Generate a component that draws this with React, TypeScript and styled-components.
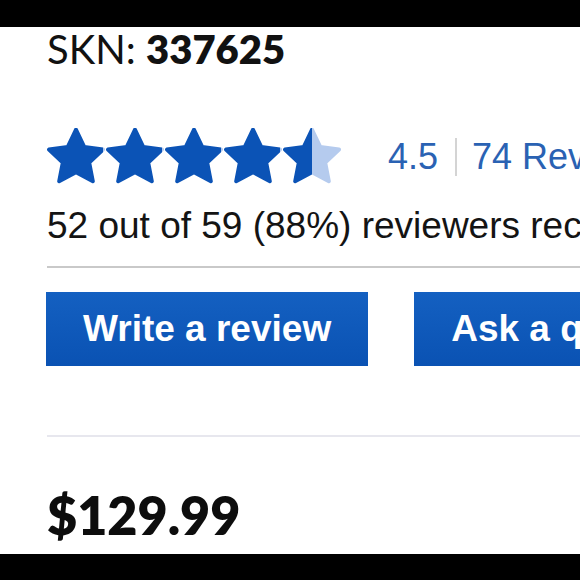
import React from 'react';
import styled, { createGlobalStyle } from 'styled-components';

const GlobalStyle = createGlobalStyle`
  html, body {
    margin: 0;
    padding: 0;
    background: #ffffff;
  }
`;

const Frame = styled.div`
  width: 580px;
  height: 580px;
  overflow: hidden;
  display: flex;
  flex-direction: column;
  background: #ffffff;
`;

const Letterbox = styled.div<{ $h: number }>`
  height: ${({ $h }) => $h}px;
  flex: none;
  background: #000000;
`;

const Content = styled.main`
  flex: 1;
  display: flex;
  flex-direction: column;
  padding-left: 47px;
  white-space: nowrap;
`;

const Sku = styled.div`
  margin-top: 0;
  font-family: Lato, 'Open Sans', sans-serif;
  font-size: 40px;
  line-height: 44px;
  color: #111111;

  strong {
    font-weight: 800;
  }
`;

const RatingRow = styled.div`
  margin-top: 57px;
  display: flex;
  align-items: center;
  height: 58px;
`;

const Stars = styled.div`
  display: flex;
  gap: 1px;
`;

const RatingText = styled.div`
  margin-left: 47px;
  font-family: 'Liberation Sans', Arial, sans-serif;
  font-size: 36px;
  color: #2a62b3;
  display: flex;
  align-items: center;
`;

const Pipe = styled.span`
  display: inline-block;
  width: 2px;
  height: 38px;
  background: #d4d4d4;
  margin: 0 15px 0 17px;
`;

const Recommend = styled.p`
  margin: 20px 0 0;
  font-family: 'Liberation Sans', Arial, sans-serif;
  font-size: 37px;
  line-height: 40px;
  color: #141414;
`;

const Divider = styled.hr<{ $tone: string; $gap: number }>`
  margin: ${({ $gap }) => $gap}px 0 0;
  border: none;
  height: 2px;
  background: ${({ $tone }) => $tone};
  flex: none;
`;

const Actions = styled.div`
  margin-top: 24px;
  margin-left: -1px;
  display: flex;
  gap: 46px;
`;

const Button = styled.button`
  flex: none;
  height: 74px;
  padding: 0 37px;
  border: none;
  border-radius: 0;
  background: linear-gradient(#1460c1, #0a52b3);
  color: #ffffff;
  font-family: 'Liberation Sans', Arial, sans-serif;
  font-weight: 700;
  font-size: 37px;
  cursor: pointer;
`;

const Price = styled.div`
  margin-top: 50px;
  font-family: Lato, 'Open Sans', sans-serif;
  font-weight: 800;
  font-size: 52px;
  line-height: 56px;
  color: #0d0d0d;
`;

const STAR = 'M12 2.2 L14.95 8.4 L21.7 9.3 L16.75 14 L18.05 20.7 L12 17.45 L5.95 20.7 L7.25 14 L2.3 9.3 L9.05 8.4 Z';

const Star: React.FC<{ fill: number; id: string }> = ({ fill, id }) => (
  <svg width="58" height="58" viewBox="1.6 1.6 20.8 20.8">
    <defs>
      <linearGradient id={id} x1="0" x2="1" y1="0" y2="0">
        <stop offset={fill} stopColor="#0b53b6" />
        <stop offset={fill} stopColor="#b5cbee" />
      </linearGradient>
    </defs>
    <path d={STAR} fill={`url(#${id})`} stroke={`url(#${id})`} strokeWidth="1.4" strokeLinejoin="round" />
  </svg>
);

const rating = 4.5;

const App: React.FC = () => {
  return (
    <Frame>
      <GlobalStyle />
      <Letterbox $h={27} />
      <Content>
        <Sku>
          SKN: <strong>337625</strong>
        </Sku>
        <RatingRow>
          <Stars>
            {[0, 1, 2, 3, 4].map((i) => (
              <Star key={i} id={`star-${i}`} fill={Math.max(0, Math.min(1, rating - i))} />
            ))}
          </Stars>
          <RatingText>
            4.5
            <Pipe />
            74 Reviews
          </RatingText>
        </RatingRow>
        <Recommend>52 out of 59 (88%) reviewers recommend this product</Recommend>
        <Divider $tone="#c9c9c9" $gap={20} />
        <Actions>
          <Button>Write a review</Button>
          <Button>Ask a question</Button>
        </Actions>
        <Divider $tone="#e7e7ee" $gap={69} />
        <Price>$129.99</Price>
      </Content>
      <Letterbox $h={26} />
    </Frame>
  );
};

export default App;
